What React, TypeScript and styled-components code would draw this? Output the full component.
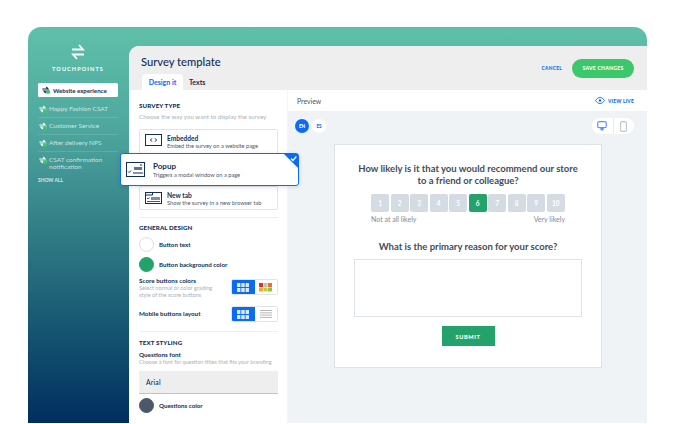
import React from 'react';
import styled, { createGlobalStyle } from 'styled-components';

const navy = '#0f2f57';
const blue = '#0a6cf5';
const green = '#23a26b';

const GlobalStyle = createGlobalStyle`
  html, body { margin: 0; padding: 0; background: #fff; }
  * { box-sizing: border-box; }
  body { font-family: "Lato", "Noto Sans", sans-serif; color: ${navy}; }
`;

const Page = styled.div`
  width: 675px;
  height: 424px;
  padding: 27px 28px 0;
  overflow: hidden;
`;

const Frame = styled.div`
  display: flex;
  width: 619px;
  height: 396px;
  border-radius: 13px 13px 0 0;
  overflow: hidden;
  background: linear-gradient(180deg, #5fc0a9 0%, #4fa89f 25%, #2a7380 58%, #124f6e 80%, #012e5f 100%);
`;

const Sidebar = styled.aside`
  width: 101px;
  flex: none;
  display: flex;
  flex-direction: column;
  padding: 17px 11px 0 10px;
`;

const Brand = styled.div`
  display: flex;
  flex-direction: column;
  align-items: center;
  gap: 5px;
  margin-bottom: 11px;
  color: #fff;
  font-size: 5.6px;
  font-weight: 700;
  letter-spacing: 1.05px;
  line-height: 7px;
`;

const NavList = styled.div`
  display: flex;
  flex-direction: column;
`;

const NavItem = styled.div<{ $active?: boolean }>`
  display: flex;
  align-items: ${(p) => (p.$active ? 'center' : 'flex-start')};
  gap: ${(p) => (p.$active ? '3px' : '2px')};
  padding: ${(p) => (p.$active ? '0 3px 0 4px' : '4px 0 4px 1px')};
  height: ${(p) => (p.$active ? '14px' : 'auto')};
  margin-bottom: ${(p) => (p.$active ? '4px' : '0')};
  min-height: ${(p) => (p.$active ? '14px' : '17px')};
  border-radius: 1.5px;
  background: ${(p) => (p.$active ? '#fff' : 'transparent')};
  border-bottom: ${(p) => (p.$active ? 'none' : '1px solid rgba(255,255,255,0.13)')};
  color: ${(p) => (p.$active ? navy : 'rgba(255,255,255,0.72)')};
  font-size: ${(p) => (p.$active ? '6.1px' : '6.5px')};
  font-weight: ${(p) => (p.$active ? 700 : 400)};
  line-height: 7px;
  &:last-child { border-bottom: none; }
`;

const NavLabel = styled.span`
  flex: 1;
`;

const ShowAll = styled.div`
  margin-top: 3px;
  color: rgba(255,255,255,0.8);
  font-size: 4.9px;
  font-weight: 700;
  line-height: 7px;
`;

const Main = styled.main`
  flex: 1;
  margin-top: 19px;
  display: flex;
  flex-direction: column;
  min-width: 0;
  background: #fff;
  border-radius: 10px 0 0 0;
`;

const Header = styled.header`
  height: 44px;
  flex: none;
  display: flex;
  background: #eeeeee;
  padding: 0 13px;
  border-radius: 10px 0 0 0;
`;

const HeaderLeft = styled.div`
  flex: 1;
  display: flex;
  flex-direction: column;
  justify-content: flex-end;
`;

const Title = styled.h1`
  margin: 0 0 5px -1px;
  font-size: 11.2px;
  line-height: 15px;
  font-weight: 500;
  color: ${navy};
`;

const Tabs = styled.div`
  display: flex;
`;

const Tab = styled.div<{ $active?: boolean }>`
  height: 16px;
  width: ${(p) => (p.$active ? '41px' : 'auto')};
  display: flex;
  align-items: center;
  justify-content: center;
  margin-left: ${(p) => (p.$active ? '0' : '6px')};
  border-radius: 4px 4px 0 0;
  background: ${(p) => (p.$active ? '#fff' : 'transparent')};
  color: ${(p) => (p.$active ? blue : navy)};
  font-size: 7px;
  font-weight: 700;
`;

const HeaderActions = styled.div`
  display: flex;
  align-items: center;
  gap: 10px;
  height: 44px;
`;

const Cancel = styled.span`
  color: ${blue};
  font-size: 4.8px;
  font-weight: 900;
  letter-spacing: 0.3px;
`;

const SaveButton = styled.button`
  width: 62px;
  height: 19px;
  border: none;
  border-radius: 10px;
  background: #3cc76a;
  color: #fff;
  font-family: inherit;
  font-size: 5.1px;
  font-weight: 900;
  letter-spacing: 0.25px;
  padding: 0;
`;

const Body = styled.div`
  flex: 1;
  display: flex;
  min-height: 0;
`;

const Settings = styled.section`
  width: 159px;
  flex: none;
  padding: 12px 9px 0 10px;
  display: flex;
  flex-direction: column;
  border-right: 1px solid #f4f4f4;
`;

const SectionTitle = styled.h3`
  margin: 0;
  font-size: 6.2px;
  line-height: 8px;
  font-weight: 900;
  letter-spacing: 0.1px;
  color: ${navy};
`;

const Hint = styled.p<{ $size?: number; $top?: number }>`
  margin: ${(p) => p.$top ?? 0}px 0 0;
  font-size: ${(p) => p.$size ?? 5.6}px;
  line-height: 6.4px;
  color: #a9b1b9;
`;

const TypeCard = styled.div<{ $selected?: boolean; $tall?: boolean }>`
  position: relative;
  display: flex;
  align-items: ${(p) => (p.$tall ? 'flex-start' : 'center')};
  background: #fff;
  ${(p) =>
    p.$selected
      ? `
    z-index: 2;
    height: 33px;
    margin: 0 -21px 0 -19px;
    padding-left: 5px;
    gap: 8px;
    border: 1px solid ${blue};
    border-radius: 3px;
    box-shadow: 0 1px 4px rgba(10, 50, 110, 0.15);
  `
      : `
    height: ${p.$tall ? '30px' : '24px'};
    padding: ${p.$tall ? '4px' : '0'} 0 0 5px;
    gap: 5px;
    border: 1px solid #e3e3e3;
    border-radius: 2px;
  `}
`;

const CardText = styled.div`
  display: flex;
  flex-direction: column;
`;

const CardTitle = styled.span<{ $big?: boolean }>`
  font-size: ${(p) => (p.$big ? '8px' : '6.6px')};
  line-height: ${(p) => (p.$big ? '10px' : '8px')};
  font-weight: 700;
  color: ${navy};
`;

const CardDesc = styled.span`
  font-size: 5.7px;
  line-height: 7.5px;
  color: #4b5a6c;
`;

const Check = styled.div`
  position: absolute;
  top: 0;
  right: 0;
  width: 0;
  height: 0;
  border-style: solid;
  border-width: 0 14px 14px 0;
  border-color: transparent ${blue} transparent transparent;
`;

const CheckMark = styled.svg`
  position: absolute;
  top: 1px;
  right: 1px;
  width: 7px;
  height: 7px;
`;

const CardStack = styled.div`
  display: flex;
  flex-direction: column;
  margin-top: 9px;
`;

const FirstCardWrap = styled.div`
  height: 24px;
`;

const Divider = styled.hr<{ $top?: number; $bottom?: number }>`
  width: 100%;
  height: 1px;
  border: none;
  margin: ${(p) => p.$top ?? 7}px 0 ${(p) => p.$bottom ?? 6}px;
  background: #eeeeee;
  flex: none;
`;

const ColorRow = styled.div<{ $top?: number }>`
  display: flex;
  align-items: center;
  gap: 5px;
  height: 15px;
  margin-top: ${(p) => p.$top ?? 5}px;
  font-size: 6.2px;
  font-weight: 700;
  color: ${navy};
`;

const Swatch = styled.span<{ $color: string; $outlined?: boolean }>`
  width: 15px;
  height: 15px;
  flex: none;
  border-radius: 50%;
  background: ${(p) => p.$color};
  border: 1px solid ${(p) => (p.$outlined ? '#dcdcdc' : p.$color)};
`;

const OptionRow = styled.div<{ $compact?: boolean }>`
  display: flex;
  justify-content: space-between;
  align-items: ${(p) => (p.$compact ? 'center' : 'flex-start')};
  height: ${(p) => (p.$compact ? '16px' : '27px')};
  margin-top: ${(p) => (p.$compact ? '0' : '7px')};
`;

const OptionLabel = styled.div<{ $top?: number }>`
  font-size: 6.3px;
  line-height: 8px;
  margin-top: ${(p) => p.$top ?? 0}px;
  font-weight: 700;
  color: ${navy};
`;

const Toggle = styled.div`
  display: flex;
  width: 47px;
  height: 16px;
  border: 1px solid #e4e4e4;
  border-radius: 2px;
  overflow: hidden;
  flex: none;
`;

const ToggleOption = styled.div<{ $active?: boolean }>`
  flex: 1;
  display: flex;
  align-items: center;
  justify-content: center;
  background: ${(p) => (p.$active ? blue : '#fff')};
`;

const FontBox = styled.div`
  height: 23px;
  margin-top: 5px;
  padding-left: 7px;
  display: flex;
  align-items: center;
  background: #eeeeee;
  border-bottom: 1px solid #c4c4c4;
  font-size: 6.8px;
  font-weight: 500;
  letter-spacing: 0.2px;
  color: ${navy};
`;

const PreviewPane = styled.section`
  flex: 1;
  min-width: 0;
  display: flex;
  flex-direction: column;
`;

const PreviewBar = styled.div`
  height: 21px;
  flex: none;
  display: flex;
  align-items: center;
  justify-content: space-between;
  padding: 0 13px 0 9px;
  font-size: 6.9px;
  color: #4a5563;
`;

const ViewLive = styled.span`
  display: flex;
  align-items: center;
  gap: 3px;
  color: ${blue};
  font-size: 4.9px;
  font-weight: 900;
  letter-spacing: 0.2px;
`;

const Stage = styled.div`
  flex: 1;
  display: flex;
  flex-direction: column;
  background: #eff3f6;
  padding: 7px 13px 0 7px;
`;

const StageTop = styled.div`
  display: flex;
  justify-content: space-between;
  align-items: center;
  height: 15px;
`;

const Langs = styled.div`
  display: flex;
  gap: 3px;
`;

const Lang = styled.span<{ $active?: boolean }>`
  width: 14px;
  height: 14px;
  border-radius: 50%;
  display: flex;
  align-items: center;
  justify-content: center;
  background: ${(p) => (p.$active ? blue : '#fff')};
  color: ${(p) => (p.$active ? '#fff' : blue)};
  font-size: 4.6px;
  font-weight: 900;
`;

const Devices = styled.div`
  display: flex;
  width: 42px;
  height: 16px;
  margin-top: 1px;
  border-radius: 8px;
  background: #fff;
`;

const Device = styled.div<{ $divided?: boolean }>`
  flex: 1;
  display: flex;
  align-items: center;
  justify-content: center;
  border-left: ${(p) => (p.$divided ? '1px solid #e8ebee' : 'none')};
`;

const SurveyCard = styled.div`
  width: 268px;
  height: 224px;
  margin: 11px 0 0 39px;
  background: #fff;
  border: 1px solid #dde3e9;
  display: flex;
  flex-direction: column;
  align-items: center;
  padding-top: 18px;
`;

const Question = styled.div`
  width: 226px;
  text-align: center;
  font-size: 9.5px;
  line-height: 12px;
  font-weight: 700;
  color: #3f4c5c;
`;

const Scores = styled.div`
  display: flex;
  gap: 1.5px;
  margin-top: 7px;
`;

const Score = styled.span<{ $selected?: boolean }>`
  width: 18px;
  height: 18px;
  border-radius: 2px;
  display: flex;
  align-items: center;
  justify-content: center;
  background: ${(p) => (p.$selected ? green : '#d4dbe2')};
  color: #fff;
  font-size: 6.6px;
  font-weight: 700;
`;

const ScoreLabels = styled.div`
  width: 194px;
  display: flex;
  justify-content: space-between;
  margin: 3px 0 18px;
  font-size: 7px;
  line-height: 8px;
  color: #7f8b98;
`;

const AnswerBox = styled.div`
  width: 228px;
  height: 58px;
  margin-top: 6px;
  border: 1px solid #dde3e9;
`;

const Submit = styled.button`
  width: 53px;
  height: 20px;
  margin-top: 9px;
  padding: 0;
  border: none;
  background: ${green};
  color: #fff;
  font-family: inherit;
  font-size: 5.6px;
  font-weight: 900;
  letter-spacing: 0.6px;
`;

const LogoIcon = () => (
  <svg width="14" height="16" viewBox="0 0 14 16" fill="none" stroke="#fff" strokeWidth="1.8">
    <path d="M1 5.5H12L8 1" />
    <path d="M13 10.5H2L6 15" />
  </svg>
);

const NavIcon = ({ dark }: { dark?: boolean }) => (
  <svg width="8" height="8" viewBox="0 0 8 8" fill="none" style={{ flex: 'none' }}>
    <path d="M.3 3H6L4.3 1M7.7 5H2L3.7 7" stroke={dark ? navy : '#fff'} strokeWidth="1.2" />
    <circle cx="6" cy="6" r="2" fill="#3cc76a" />
  </svg>
);

const EmbedIcon = () => (
  <svg width="17" height="12" viewBox="0 0 17 12" fill="none" style={{ flex: 'none' }}>
    <rect x=".5" y=".5" width="16" height="11" stroke={navy} />
    <path d="M7 4.3 5.5 6 7 7.7M10 4.3 11.5 6 10 7.7" stroke={navy} />
  </svg>
);

const PopupIcon = () => (
  <svg width="19" height="15" viewBox="0 0 19 15" fill="none" style={{ flex: 'none' }}>
    <rect x=".5" y=".5" width="18" height="14" stroke={navy} />
    <rect x="8" y="5" width="8" height="3" fill="#5d7390" />
    <path d="M2 9.5 3 10.5 5 8.5M7 11H17M14 3H16" stroke={navy} />
  </svg>
);

const TabIcon = () => (
  <svg width="17" height="12" viewBox="0 0 17 12" fill="none" style={{ flex: 'none' }}>
    <rect x=".5" y=".5" width="16" height="11" stroke={navy} />
    <path d="M.5 3H7.5V.5" stroke={navy} />
    <rect x="6" y="5" width="9" height="3" fill="#7d8ea5" />
    <path d="M2 6 3 7 4.5 5.5M2 9.5H15" stroke={navy} strokeWidth=".8" />
  </svg>
);

const GridIcon = () => (
  <svg width="12" height="9" viewBox="0 0 12 9" fill="#fff" opacity=".85">
    <rect width="3.4" height="4" />
    <rect x="4.3" width="3.4" height="4" />
    <rect x="8.6" width="3.4" height="4" />
    <rect y="5" width="3.4" height="4" />
    <rect x="4.3" y="5" width="3.4" height="4" />
    <rect x="8.6" y="5" width="3.4" height="4" />
  </svg>
);

const ColorGridIcon = () => (
  <svg width="13" height="9" viewBox="0 0 13 9">
    <rect width="4" height="4" fill="#d0392b" />
    <rect x="4.5" width="4" height="4" fill="#c2c2c2" />
    <rect x="9" width="4" height="4" fill="#e9722f" />
    <rect y="4.5" width="4" height="4" fill="#f0a83a" />
    <rect x="4.5" y="4.5" width="4" height="4" fill="#b5cf3f" />
    <rect x="9" y="4.5" width="4" height="4" fill="#8cc63f" />
  </svg>
);

const LinesIcon = () => (
  <svg width="12" height="8" viewBox="0 0 12 8" stroke="#a5a5a5" strokeWidth=".8">
    <path d="M0 .5H12M0 2.8H12M0 5.1H12M0 7.4H12" />
  </svg>
);

const EyeIcon = () => (
  <svg width="10" height="7" viewBox="0 0 10 7" fill="none" stroke={blue}>
    <path d="M.5 3.5C2 1.3 3.4.5 5 .5S8 1.3 9.5 3.5C8 5.7 6.6 6.5 5 6.5S2 5.7.5 3.5Z" strokeWidth=".9" />
    <circle cx="5" cy="3.5" r="1.2" fill={blue} stroke="none" />
  </svg>
);

const MonitorIcon = () => (
  <svg width="10" height="10" viewBox="0 0 10 10" fill="none">
    <rect x=".7" y=".7" width="8.6" height="6" rx="1.5" stroke="#5b97ef" strokeWidth="1.2" />
    <path d="M3.2 6.5H6.8L6.3 9.5H3.7Z" fill="#5b97ef" />
  </svg>
);

const PhoneIcon = () => (
  <svg width="7" height="11" viewBox="0 0 7 11" fill="none">
    <rect x=".6" y=".6" width="5.8" height="9.8" rx="1.3" stroke="#c4c4c4" strokeWidth="1.1" />
  </svg>
);

const navItems = ['Happy Fashion CSAT', 'Customer Service', 'After delivery NPS', 'CSAT confirmation notification'];

export default function App() {
  return (
    <Page>
      <GlobalStyle />
      <Frame>
        <Sidebar>
          <Brand>
            <LogoIcon />
            TOUCHPOINTS
          </Brand>
          <NavList>
            <NavItem $active>
              <NavIcon dark />
              <NavLabel>Website experience</NavLabel>
            </NavItem>
            {navItems.map((item) => (
              <NavItem key={item}>
                <NavIcon />
                <NavLabel>{item}</NavLabel>
              </NavItem>
            ))}
          </NavList>
          <ShowAll>SHOW ALL</ShowAll>
        </Sidebar>
        <Main>
          <Header>
            <HeaderLeft>
              <Title>Survey template</Title>
              <Tabs>
                <Tab $active>Design it</Tab>
                <Tab>Texts</Tab>
              </Tabs>
            </HeaderLeft>
            <HeaderActions>
              <Cancel>CANCEL</Cancel>
              <SaveButton>SAVE CHANGES</SaveButton>
            </HeaderActions>
          </Header>
          <Body>
            <Settings>
              <SectionTitle>SURVEY TYPE</SectionTitle>
              <Hint $size={6.2} $top={4}>Choose the way you want to display the survey</Hint>
              <CardStack>
                <FirstCardWrap>
                  <TypeCard $tall>
                    <EmbedIcon />
                    <CardText>
                      <CardTitle>Embedded</CardTitle>
                      <CardDesc>Embed the survey on a website page</CardDesc>
                    </CardText>
                  </TypeCard>
                </FirstCardWrap>
                <TypeCard $selected>
                  <PopupIcon />
                  <CardText>
                    <CardTitle $big>Popup</CardTitle>
                    <CardDesc>Triggers a modal window on a page</CardDesc>
                  </CardText>
                  <Check />
                  <CheckMark viewBox="0 0 7 7" fill="none" stroke="#fff" strokeWidth="1.2">
                    <path d="M1 3.5 3 5.5 6.3 1.5" />
                  </CheckMark>
                </TypeCard>
                <TypeCard>
                  <TabIcon />
                  <CardText>
                    <CardTitle>New tab</CardTitle>
                    <CardDesc>Show the survey in a new browser tab</CardDesc>
                  </CardText>
                </TypeCard>
              </CardStack>
              <Divider />
              <SectionTitle>GENERAL DESIGN</SectionTitle>
              <ColorRow>
                <Swatch $color="#fff" $outlined />
                Button text
              </ColorRow>
              <ColorRow>
                <Swatch $color={green} />
                Button background color
              </ColorRow>
              <OptionRow>
                <div>
                  <OptionLabel $top={-2}>Score buttons colors</OptionLabel>
                  <Hint>
                    Select normal or color grading
                    <br />
                    style of the score buttons
                  </Hint>
                </div>
                <Toggle>
                  <ToggleOption $active>
                    <GridIcon />
                  </ToggleOption>
                  <ToggleOption>
                    <ColorGridIcon />
                  </ToggleOption>
                </Toggle>
              </OptionRow>
              <OptionRow $compact>
                <OptionLabel>Mobile buttons layout</OptionLabel>
                <Toggle>
                  <ToggleOption $active>
                    <GridIcon />
                  </ToggleOption>
                  <ToggleOption>
                    <LinesIcon />
                  </ToggleOption>
                </Toggle>
              </OptionRow>
              <Divider $top={9} $bottom={7} />
              <SectionTitle>TEXT STYLING</SectionTitle>
              <OptionLabel $top={4}>Questions font</OptionLabel>
              <Hint $size={5.5}>Choose a font for question titles that fits your branding</Hint>
              <FontBox>Arial</FontBox>
              <ColorRow $top={4}>
                <Swatch $color="#4a586a" />
                Questions color
              </ColorRow>
            </Settings>
            <PreviewPane>
              <PreviewBar>
                Preview
                <ViewLive>
                  <EyeIcon />
                  VIEW LIVE
                </ViewLive>
              </PreviewBar>
              <Stage>
                <StageTop>
                  <Langs>
                    <Lang $active>EN</Lang>
                    <Lang>ES</Lang>
                  </Langs>
                  <Devices>
                    <Device>
                      <MonitorIcon />
                    </Device>
                    <Device $divided>
                      <PhoneIcon />
                    </Device>
                  </Devices>
                </StageTop>
                <SurveyCard>
                  <Question>How likely is it that you would recommend our store to a friend or colleague?</Question>
                  <Scores>
                    {[1, 2, 3, 4, 5, 6, 7, 8, 9, 10].map((n) => (
                      <Score key={n} $selected={n === 6}>
                        {n}
                      </Score>
                    ))}
                  </Scores>
                  <ScoreLabels>
                    <span>Not at all likely</span>
                    <span>Very likely</span>
                  </ScoreLabels>
                  <Question>What is the primary reason for your score?</Question>
                  <AnswerBox />
                  <Submit>SUBMIT</Submit>
                </SurveyCard>
              </Stage>
            </PreviewPane>
          </Body>
        </Main>
      </Frame>
    </Page>
  );
}
